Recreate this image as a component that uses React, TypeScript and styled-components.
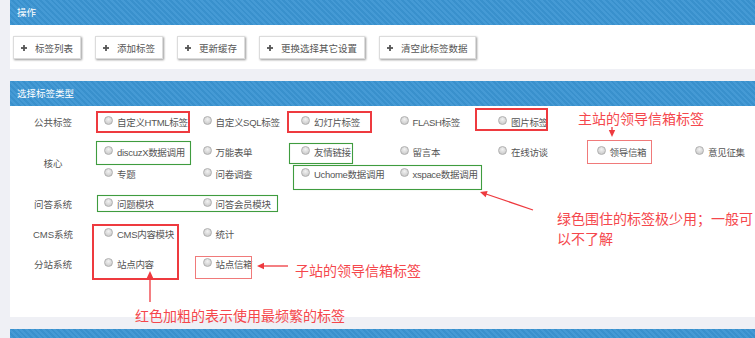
import React from "react";
import styled, { createGlobalStyle } from "styled-components";

const GlobalStyle = createGlobalStyle`
  html, body {
    margin: 0;
    padding: 0;
    background: #eff0f5;
    overflow: hidden;
    font-family: "Liberation Sans", "Noto Sans CJK SC", sans-serif;
  }
  * { box-sizing: border-box; }
`;

const Page = styled.div`
  position: relative;
  width: 755px;
  height: 338px;
  padding-left: 10px;
  overflow: hidden;
`;

const Panel = styled.section<{ $gap?: number }>`
  background: #fff;
  margin-bottom: ${(p) => p.$gap ?? 0}px;
`;

const PanelHeader = styled.div`
  height: 25px;
  line-height: 25px;
  padding-left: 7px;
  color: #fff;
  font-size: 9.5px;
  background-color: #3b95d3;
  background-image: repeating-linear-gradient(
    45deg,
    rgba(255, 255, 255, 0.05) 0px,
    rgba(255, 255, 255, 0.05) 2px,
    rgba(0, 0, 0, 0.03) 2px,
    rgba(0, 0, 0, 0.03) 4px
  );
`;

const Toolbar = styled.div`
  display: flex;
  gap: 14px;
  padding: 11px 3px 10px;
`;

const ToolButton = styled.button`
  display: flex;
  align-items: center;
  gap: 8px;
  height: 23px;
  padding: 0 7px;
  border: 1px solid #dcdcdc;
  background: #fff;
  color: #555;
  font-family: inherit;
  font-size: 9.5px;
  box-shadow: 1px 1px 2px rgba(0, 0, 0, 0.4);
  cursor: pointer;
`;

const PlusIcon = () => (
  <svg width="6" height="6" viewBox="0 0 6 6">
    <rect x="2.1" y="0" width="1.8" height="6" fill="#555" />
    <rect x="0" y="2.1" width="6" height="1.8" fill="#555" />
  </svg>
);

const TypeBody = styled.div`
  height: 211px;
  padding-top: 1px;
`;

const Row = styled.div`
  display: flex;
  align-items: center;
  padding: 4px 0;
`;

const RowLabel = styled.div`
  width: 86px;
  flex-shrink: 0;
  text-align: center;
  font-size: 9.5px;
  color: #555;
`;

const Lines = styled.div`
  display: flex;
  flex-direction: column;
`;

const Line = styled.div`
  display: flex;
`;

const Item = styled.label`
  display: flex;
  align-items: center;
  width: 98.5px;
  height: 22px;
  flex-shrink: 0;
  padding-left: 8px;
  font-size: 9.5px;
  letter-spacing: -0.3px;
  color: #555;
  white-space: nowrap;
`;

const Radio = styled.span`
  width: 9px;
  height: 9px;
  border-radius: 50%;
  margin-right: 4px;
  margin-top: -3px;
  flex-shrink: 0;
  border: 1px solid #b0b0b0;
  background: radial-gradient(circle at 50% 35%, #f2f2f2 0%, #d8d8d8 55%, #c0c0c0 100%);
`;

const Overlay = styled.div`
  position: absolute;
  inset: 0;
  pointer-events: none;
`;

const Note = styled.div<{ $x: number; $y: number; $w?: number }>`
  position: absolute;
  left: ${(p) => p.$x}px;
  top: ${(p) => p.$y}px;
  width: ${(p) => (p.$w ? `${p.$w}px` : "auto")};
  font-family: "Noto Sans CJK SC", sans-serif;
  font-size: 14px;
  line-height: 20px;
  color: #f5474c;
  white-space: ${(p) => (p.$w ? "normal" : "nowrap")};
`;

const Drawing = styled.svg`
  position: absolute;
  left: 0;
  top: 0;
`;

const rows: { label: string; lines: string[][] }[] = [
  { label: "公共标签", lines: [["自定义HTML标签", "自定义SQL标签", "幻灯片标签", "FLASH标签", "图片标签"]] },
  {
    label: "核心",
    lines: [
      ["discuzX数据调用", "万能表单", "友情链接", "留言本", "在线访谈", "领导信箱", "意见征集"],
      ["专题", "问卷调查", "Uchome数据调用", "xspace数据调用"],
    ],
  },
  { label: "问答系统", lines: [["问题模块", "问答会员模块"]] },
  { label: "CMS系统", lines: [["CMS内容模块", "统计"]] },
  { label: "分站系统", lines: [["站点内容", "站点信箱"]] },
];

const buttons = ["标签列表", "添加标签", "更新缓存", "更换选择其它设置", "清空此标签数据"];

type Kind = "red" | "thin" | "green";
const marks: { x: number; y: number; w: number; h: number; kind: Kind }[] = [
  { x: 96, y: 111, w: 94, h: 22, kind: "red" },
  { x: 287, y: 111, w: 85, h: 22, kind: "red" },
  { x: 475, y: 108, w: 73, h: 23, kind: "red" },
  { x: 92, y: 224, w: 87, h: 56, kind: "red" },
  { x: 587, y: 140, w: 65, h: 24, kind: "thin" },
  { x: 195, y: 256, w: 57, h: 23, kind: "thin" },
  { x: 96, y: 141, w: 95, h: 24, kind: "green" },
  { x: 289, y: 143, w: 64, h: 21, kind: "green" },
  { x: 293, y: 165, w: 189, h: 25, kind: "green" },
  { x: 97, y: 195, w: 181, h: 17, kind: "green" },
];

const strokeOf: Record<Kind, [string, number]> = {
  red: ["#ee3a3f", 2],
  thin: ["#f07a7a", 1],
  green: ["#3f9c3f", 1.1],
};

const Head = ({ x, y, rot }: { x: number; y: number; rot: number }) => (
  <polygon points="0,0 -7,-3.2 -7,3.2" fill="#ee3a3f" transform={`translate(${x} ${y}) rotate(${rot})`} />
);

export default function App() {
  return (
    <>
      <GlobalStyle />
      <Page>
        <Panel $gap={12}>
          <PanelHeader>操作</PanelHeader>
          <Toolbar>
            {buttons.map((b) => (
              <ToolButton key={b}>
                <PlusIcon />
                {b}
              </ToolButton>
            ))}
          </Toolbar>
        </Panel>
        <Panel $gap={12}>
          <PanelHeader>选择标签类型</PanelHeader>
          <TypeBody>
            {rows.map((r) => (
              <Row key={r.label}>
                <RowLabel>{r.label}</RowLabel>
                <Lines>
                  {r.lines.map((line, i) => (
                    <Line key={i}>
                      {line.map((o) => (
                        <Item key={o}>
                          <Radio />
                          {o}
                        </Item>
                      ))}
                    </Line>
                  ))}
                </Lines>
              </Row>
            ))}
          </TypeBody>
        </Panel>
        <Panel>
          <PanelHeader />
        </Panel>

        <Overlay>
          <Drawing width="755" height="338" viewBox="0 0 755 338">
            {marks.map((m, i) => {
              const [c, sw] = strokeOf[m.kind];
              const o = Math.round(sw) / 2;
              return (
                <rect
                  key={i}
                  x={m.x + o}
                  y={m.y + o}
                  width={m.w - Math.round(sw)}
                  height={m.h - Math.round(sw)}
                  fill="none"
                  stroke={c}
                  strokeWidth={sw}
                />
              );
            })}
            <line x1="612" y1="127" x2="612" y2="132" stroke="#ee3a3f" strokeWidth="1.3" />
            <Head x={612} y={137} rot={90} />
            <line x1="533" y1="210" x2="486" y2="194" stroke="#ee3a3f" strokeWidth="1.3" />
            <Head x={480} y={192} rot={198} />
            <line x1="288" y1="266" x2="263" y2="266" stroke="#ee3a3f" strokeWidth="1.3" />
            <Head x={257} y={266} rot={180} />
            <line x1="150" y1="302" x2="150" y2="278" stroke="#ee3a3f" strokeWidth="1.3" />
            <Head x={150} y={271} rot={270} />
          </Drawing>
          <Note $x={578} $y={108}>主站的领导信箱标签</Note>
          <Note $x={557} $y={208} $w={200}>绿色围住的标签极少用；一般可以不了解</Note>
          <Note $x={295} $y={260}>子站的领导信箱标签</Note>
          <Note $x={135} $y={305}>红色加粗的表示使用最频繁的标签</Note>
        </Overlay>
      </Page>
    </>
  );
}
